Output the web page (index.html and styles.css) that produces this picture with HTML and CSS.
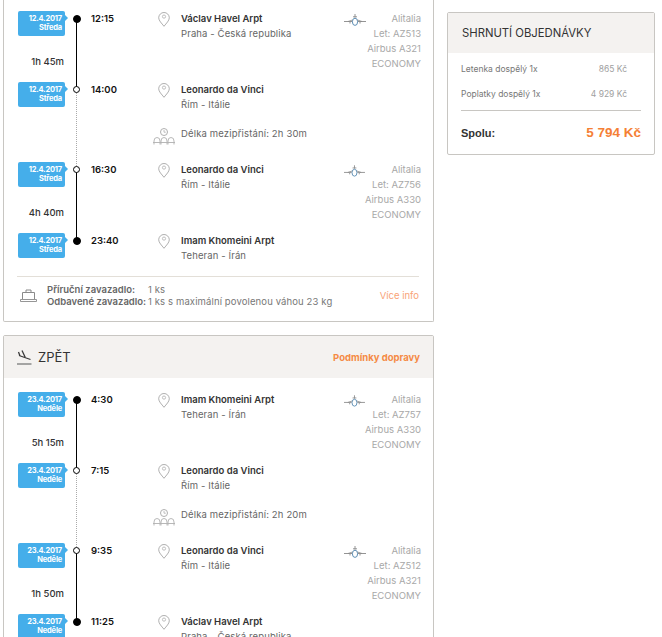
FILE: index.html
```html
<!DOCTYPE html>
<html lang="cs">
<head>
<meta charset="utf-8">
<title>Shrnutí objednávky</title>
<link rel="stylesheet" href="styles.css">
</head>
<body>
<svg class="defs" width="0" height="0" aria-hidden="true">
  <symbol id="pin" viewBox="0 0 12 15">
    <path d="M6 14.300C3.600 11.200.7 8.600.7 5.800a5.300 5.300 0 0 1 10.600 0c0 2.800-2.900 5.400-5.300 8.500Z" fill="none" stroke="currentColor"/>
    <circle cx="6" cy="4.600" r="1.600" fill="none" stroke="currentColor" stroke-width=".8"/>
  </symbol>
  <symbol id="plane" viewBox="0 0 22 14">
    <path d="M0 8.500h8M14 8.500h8M6 9v1.500M16 9v1.500M11 1v3.500M9 3.800h4" fill="none" stroke="currentColor" stroke-width=".9"/>
    <ellipse cx="11" cy="8.800" rx="2.600" ry="3.600" fill="none" stroke="#5f8fb5"/>
    <path d="M8.500 7 4 8.500M13.500 7l4.500 1.500" fill="none" stroke="#888" stroke-width=".8"/>
  </symbol>
  <symbol id="wait" viewBox="0 0 22 17">
    <circle cx="11" cy="4" r="3.500" fill="none" stroke="currentColor"/>
    <path d="M11 2v2.200h1.800" fill="none" stroke="currentColor" stroke-width=".8"/>
    <path d="M1 16.500v-3.500a3 3.500 0 0 1 6 0v3.500M8 16.500v-3.500a3 3.500 0 0 1 6 0v3.500M15 16.500v-3.500a3 3.500 0 0 1 6 0v3.500M0 14.500h22" fill="none" stroke="currentColor" stroke-width=".9"/>
  </symbol>
  <symbol id="bag" viewBox="0 0 17 15">
    <path d="M2.500 11V4.500h12V11M6 4.500V2h5v2.500" fill="none" stroke="currentColor"/>
    <path d="M.5 11.500h16v2H.5Z" fill="none" stroke="currentColor" stroke-width=".9"/>
  </symbol>
  <symbol id="landing" viewBox="0 0 15 15">
    <path d="M2 5.500 13.500 9.500M5 .5 8.300 7.500M1.500 2 3 6" fill="none" stroke="#3a3a3a" stroke-width="1.300"/>
    <path d="M0 14h14.500" stroke="#8a8a8a" stroke-width="1.500"/>
  </symbol>
</svg>

<div class="page">
  <main class="main">
    <section class="card card-first">
      <div class="leg">
        <div class="stop">
          <div class="when"><div class="badge">12.4.2017<br>Středa</div><div class="dur">1h 45m</div></div>
          <div class="axis axis-solid"><span class="dot dot-full"></span></div>
          <div class="time">12:15</div>
          <svg class="ico-pin"><use href="#pin"/></svg>
          <div class="place"><b>Václav Havel Arpt</b><span>Praha - Česká republika</span></div>
          <div class="flight"><svg class="ico-plane"><use href="#plane"/></svg><div class="flight-text">Alitalia<br>Let: AZ513<br>Airbus A321<br>ECONOMY</div></div>
        </div>
        <div class="stop stop-layover">
          <div class="when"><div class="badge">12.4.2017<br>Středa</div></div>
          <div class="axis axis-dotted"><span class="dot"></span></div>
          <div class="time">14:00</div>
          <svg class="ico-pin"><use href="#pin"/></svg>
          <div class="place"><b>Leonardo da Vinci</b><span>Řím - Itálie</span></div>
          <svg class="ico-wait"><use href="#wait"/></svg>
          <div class="layover">Délka mezipřistání: 2h 30m</div>
        </div>
        <div class="stop">
          <div class="when"><div class="badge">12.4.2017<br>Středa</div><div class="dur">4h 40m</div></div>
          <div class="axis axis-solid"><span class="dot"></span></div>
          <div class="time">16:30</div>
          <svg class="ico-pin"><use href="#pin"/></svg>
          <div class="place"><b>Leonardo da Vinci</b><span>Řím - Itálie</span></div>
          <div class="flight"><svg class="ico-plane"><use href="#plane"/></svg><div class="flight-text">Alitalia<br>Let: AZ756<br>Airbus A330<br>ECONOMY</div></div>
        </div>
        <div class="stop stop-last">
          <div class="when"><div class="badge">12.4.2017<br>Středa</div></div>
          <div class="axis"><span class="dot dot-full"></span></div>
          <div class="time">23:40</div>
          <svg class="ico-pin"><use href="#pin"/></svg>
          <div class="place"><b>Imam Khomeini Arpt</b><span>Teheran - Írán</span></div>
        </div>
      </div>
      <div class="luggage">
        <svg class="ico-bag"><use href="#bag"/></svg>
        <div class="luggage-grid">
          <b>Příruční zavazadlo:</b><span>1 ks</span>
          <b>Odbavené zavazadlo:</b><span>1 ks s maximální povolenou váhou 23 kg</span>
        </div>
        <a class="more">Více info</a>
      </div>
    </section>

    <section class="card">
      <header class="card-head">
        <svg class="ico-landing"><use href="#landing"/></svg>
        <h2>ZPĚT</h2>
        <a class="terms">Podmínky dopravy</a>
      </header>
      <div class="leg">
        <div class="stop">
          <div class="when"><div class="badge">23.4.2017<br>Neděle</div><div class="dur">5h 15m</div></div>
          <div class="axis axis-solid"><span class="dot dot-full"></span></div>
          <div class="time">4:30</div>
          <svg class="ico-pin"><use href="#pin"/></svg>
          <div class="place"><b>Imam Khomeini Arpt</b><span>Teheran - Írán</span></div>
          <div class="flight"><svg class="ico-plane"><use href="#plane"/></svg><div class="flight-text">Alitalia<br>Let: AZ757<br>Airbus A330<br>ECONOMY</div></div>
        </div>
        <div class="stop stop-layover">
          <div class="when"><div class="badge">23.4.2017<br>Neděle</div></div>
          <div class="axis axis-dotted"><span class="dot"></span></div>
          <div class="time">7:15</div>
          <svg class="ico-pin"><use href="#pin"/></svg>
          <div class="place"><b>Leonardo da Vinci</b><span>Řím - Itálie</span></div>
          <svg class="ico-wait"><use href="#wait"/></svg>
          <div class="layover">Délka mezipřistání: 2h 20m</div>
        </div>
        <div class="stop">
          <div class="when"><div class="badge">23.4.2017<br>Neděle</div><div class="dur">1h 50m</div></div>
          <div class="axis axis-solid"><span class="dot"></span></div>
          <div class="time">9:35</div>
          <svg class="ico-pin"><use href="#pin"/></svg>
          <div class="place"><b>Leonardo da Vinci</b><span>Řím - Itálie</span></div>
          <div class="flight"><svg class="ico-plane"><use href="#plane"/></svg><div class="flight-text">Alitalia<br>Let: AZ512<br>Airbus A321<br>ECONOMY</div></div>
        </div>
        <div class="stop stop-last">
          <div class="when"><div class="badge">23.4.2017<br>Neděle</div></div>
          <div class="axis"><span class="dot dot-full"></span></div>
          <div class="time">11:25</div>
          <svg class="ico-pin"><use href="#pin"/></svg>
          <div class="place"><b>Václav Havel Arpt</b><span>Praha - Česká republika</span></div>
        </div>
      </div>
    </section>
  </main>

  <aside class="summary">
    <h2 class="summary-head">SHRNUTÍ OBJEDNÁVKY</h2>
    <div class="summary-body">
      <div class="sum-row"><span>Letenka dospělý 1x</span><span class="price">865 Kč</span></div>
      <div class="sum-row"><span>Poplatky dospělý 1x</span><span class="price">4 929 Kč</span></div>
      <div class="sum-total"><b>Spolu:</b><b class="total">5 794 Kč</b></div>
    </div>
  </aside>
</div>
</body>
</html>
```
FILE: styles.css
```css
* { box-sizing: border-box; }
html, body { margin: 0; height: 637px; overflow: hidden; background: #fff; }
body { font-family: Inter, "Open Sans", sans-serif; font-size: 9.5px; color: #333; }
.defs { position: absolute; }
.page { display: flex; align-items: flex-start; padding-left: 3px; gap: 13px; }
.main { width: 431px; flex: none; display: flex; flex-direction: column; gap: 13px; }

.card { border: 1px solid #c8c6c2; border-radius: 2px; background: #fff; }
.card-first { border-top: 0; padding-top: 11px; border-radius: 0 0 2px 2px; }

.card-head { height: 42px; background: #f4f2f0; display: flex; align-items: center; padding: 0 13px; margin-bottom: 14px; }
.card-head h2 { margin: 0 0 1px 6px; font-size: 13px; font-weight: 400; color: #333; }
.ico-landing { width: 15px; height: 15px; }
.terms { margin-left: auto; font-size: 9.5px; font-weight: 700; color: #f58a45; }

.stop { display: grid; grid-template-columns: 47px 23px 65px 28px 163px 77px; grid-template-rows: 36px 1fr; height: 71px; padding-left: 14px; }
.stop-layover { height: 80px; }
.stop-last { height: 43px; }

.when { grid-column: 1; grid-row: 1 / 3; }
.badge { position: relative; width: 47px; height: 25px; padding: 3px 3px 0 0; background: #45aeea; border-radius: 2px; color: #fff; font-size: 7.5px; font-weight: 700; line-height: 9px; text-align: right; letter-spacing: -.2px; }
.badge::after { content: ""; position: absolute; left: 47px; top: 4px; border: 3px solid transparent; border-left-color: #45aeea; border-right-width: 0; }
.dur { margin-top: 20px; padding-right: 1px; text-align: right; font-size: 9.5px; font-weight: 500; line-height: 12px; white-space: nowrap; color: #333; }

.axis { grid-column: 2; grid-row: 1 / 3; position: relative; }
.axis-solid::before, .axis-dotted::before { content: ""; position: absolute; left: 11px; top: 8px; bottom: -8px; }
.axis-solid::before { border-left: 1.5px solid #000; }
.axis-dotted::before { border-left: 1px dotted #aaa; }
.dot { position: absolute; left: 8px; top: 4px; width: 7px; height: 7px; border: 1.5px solid #000; border-radius: 50%; background: #fff; }
.dot-full { background: #000; left: 7.500px; top: 4px; width: 8px; height: 8px; }

.time { grid-column: 3; grid-row: 1; padding: 2px 0 0 3px; font-size: 9.5px; font-weight: 600; line-height: 12px; color: #111; }
.ico-pin { grid-column: 4; grid-row: 1; width: 12px; height: 15px; margin: 1px 0 0 5px; color: #b0b0b0; }
.place { grid-column: 5; grid-row: 1; display: flex; flex-direction: column; line-height: 15px; letter-spacing: .12px; }
.place b { font-weight: 600; color: #333; letter-spacing: 0; }
.place span { color: #666; }

.ico-wait { grid-column: 4; grid-row: 2; width: 22px; height: 17px; margin-top: 10px; color: #b0b0b0; }
.layover { grid-column: 5; grid-row: 2; padding-top: 10px; line-height: 12px; color: #666; letter-spacing: .15px; }

.flight { grid-column: 6; grid-row: 1 / 3; display: flex; justify-content: space-between; align-items: flex-start; }
.ico-plane { width: 22px; height: 14px; margin-top: 2px; color: #888; }
.flight-text { color: #a8a8a8; line-height: 15px; text-align: right; white-space: nowrap; }

.luggage { display: flex; align-items: center; margin: 0 14px 0 13px; padding: 6px 0 13px 3px; border-top: 1px solid #e3dfd8; height: 45px; }
.ico-bag { width: 17px; height: 15px; color: #8a8a8a; }
.luggage-grid { display: grid; grid-template-columns: 101px auto; margin-left: 10px; line-height: 12px; color: #777; letter-spacing: .12px; }
.luggage-grid b { font-weight: 600; color: #666; letter-spacing: 0; }
.more { margin-left: auto; color: #f9a377; }

.summary { width: 208px; flex: none; margin-top: 12px; border: 1px solid #c8c6c2; border-radius: 2px; }
.summary-head { margin: 0; height: 40px; padding-left: 14px; background: #f4f2f0; font-size: 11.3px; font-weight: 400; line-height: 41px; color: #333; }
.summary-body { padding: 10px 13px 0; }
.sum-row { display: flex; justify-content: space-between; padding-right: 14px; height: 25px; font-size: 8.5px; line-height: 13px; color: #777; }
.price { color: #a0a0a0; }
.sum-total { display: flex; justify-content: space-between; align-items: center; height: 44px; margin-top: -3px; border-top: 1px solid #c8c6c2; }
.sum-total b { font-family: "Liberation Sans", sans-serif; font-size: 11px; color: #333; }
.sum-total .total { font-size: 13.500px; color: #f57f36; }
```
